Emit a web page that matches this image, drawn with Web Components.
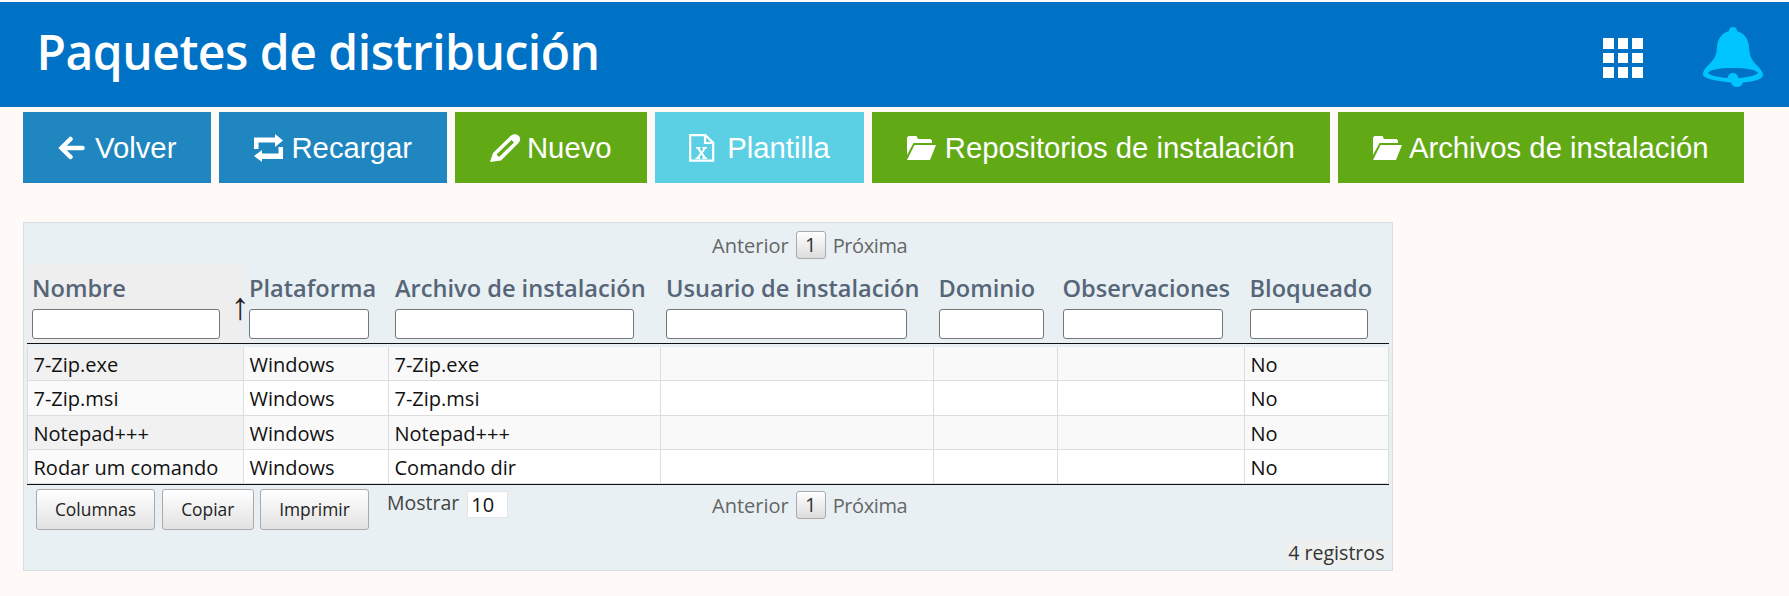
<!DOCTYPE html>
<html lang="es">
<head>
<meta charset="utf-8">
<title>Paquetes de distribución</title>
<style>
html,body{margin:0;padding:0;background:#fff9f7}
body{padding-top:2px;font-family:"Open Sans","Noto Sans",sans-serif;color:#222}
</style>
</head>
<body>
<app-header title-text="Paquetes de distribución"></app-header>
<action-bar>
  <action-btn kind="blue" gap="10" label="Volver">
    <svg slot="icon" width="27" height="24" viewBox="0 0 27 24"><path d="M24.500 12H4M12.500 3 3.500 12l9 9" fill="none" stroke="#fff" stroke-width="4.500" stroke-linecap="round"/></svg>
  </action-btn>
  <action-btn kind="blue" gap="8" label="Recargar">
    <svg slot="icon" width="29" height="28" viewBox="0 0 29 28"><path d="M0 15V3.500h21V0l8 6.500-8 6.500V8.500H4.500V15zM29 13v12H8v3l-8-6 8-6v3.500h16.500V13z" fill="#fff"/></svg>
  </action-btn>
  <action-btn kind="green" gap="6" label="Nuevo">
    <svg slot="icon" width="31" height="30" viewBox="0 0 31 30"><path d="M0 29 3 20 20.500 3C23 .6 26 .6 28.300 2.600s2.600 5 .2 7.400L11 27.500z" fill="#fff"/><path d="M6.500 21.500 21.500 7l2.500 2.500L9 24z" fill="#62a916"/></svg>
  </action-btn>
  <action-btn kind="cyan" gap="12.500" pad="34" label="Plantilla">
    <svg slot="icon" width="26" height="28" viewBox="0 0 26 28"><path d="M1.200 1.200h15l8 7.500v18H1.200zM16 1.500v7.500h8" fill="none" stroke="#fff" stroke-width="2.200"/><path d="M7 13h4.500v1.500H10.600l1.900 3 1.900-3h-.9V13H18v1.500h-1.200l-3 4.500 3.200 4.500H18V25h-4.600v-1.500h.9l-2-3-2 3h.9V25H6.500v-1.500h1.400l3.200-4.500-3-4.500H7z" fill="#fff"/></svg>
  </action-btn>
  <action-btn kind="green" gap="9" label="Repositorios de instalación">
    <svg slot="icon" width="29" height="24" viewBox="0 0 29 24"><path d="M0 1.500 1.500 0h8L11 3h12.500L25 4.500V7H6.500L0 19z" fill="#fff"/><path d="M7.500 9H29l-6 15H0z" fill="#fff"/></svg>
  </action-btn>
  <action-btn kind="green" gap="7" label="Archivos de instalación">
    <svg slot="icon" width="29" height="24" viewBox="0 0 29 24"><path d="M0 1.500 1.500 0h8L11 3h12.500L25 4.500V7H6.500L0 19z" fill="#fff"/><path d="M7.500 9H29l-6 15H0z" fill="#fff"/></svg>
  </action-btn>
</action-bar>
<data-panel></data-panel>

<script>
function shadow(el, html){ el.attachShadow({mode:'open'}).innerHTML = html; }

class AppHeader extends HTMLElement{
  connectedCallback(){
    const cells = Array.from({length:9},()=>'<i></i>').join('');
    shadow(this,`<style>
      :host{display:flex;align-items:center;height:105px;background:#0072c6;color:#fff;padding-left:36.500px;padding-right:26px;box-sizing:border-box}
      h1{margin:0 auto 0 0;font:600 48px/1 "Open Sans","Noto Sans",sans-serif;position:relative;top:-3px;letter-spacing:-.5px}
      .grid{display:grid;grid-template-columns:repeat(3,10.600px);grid-auto-rows:10.600px;gap:4.100px;margin-right:60px;margin-top:7px}
      .grid i{background:#fff;display:block}
      svg{display:block;margin-top:4px}
    </style>
    <h1>${this.getAttribute('title-text')}</h1>
    <div class="grid">${cells}</div>
    <svg width="60" height="60" viewBox="0 0 60 60"><path fill="#00c4ff" d="M30 0c2.500 0 4 1.500 4 4 7 2 11.500 8 12 16 .5 8 1.500 12 8.500 19 3.500 3.500 5.500 6 5.500 9 0 3.500-6 6-20 7.500-.8 3-3.300 4.500-6 4.500s-5.200-1.500-6-4.500C14 54 0 52 0 47c0-3 2-5.500 5.500-9C12.500 31 13.500 27.500 14 20c.5-8 5-14 12-16 0-2.500 1.500-4 4-4z"/><path fill="#0072c6" d="M30 41c-14 0-24 2-25 5 2 2.500 10 4.500 19.500 5 .5-3 2.500-5 5.500-5s5 2 5.500 5c9.500-.5 17.500-2.500 19.500-5-1-3-11-5-25-5z"/></svg>`);
  }
}
customElements.define('app-header',AppHeader);

class ActionBar extends HTMLElement{
  connectedCallback(){
    shadow(this,`<style>:host{display:flex;gap:8px;margin:5px 0 0 23px}</style><slot></slot>`);
  }
}
customElements.define('action-bar',ActionBar);

class ActionBtn extends HTMLElement{
  connectedCallback(){
    const colors={blue:'#2086bf',green:'#62a916',cyan:'#5bcfe3'};
    const c=colors[this.getAttribute('kind')];
    const gap=this.getAttribute('gap');
    const pad=this.getAttribute('pad')||35;
    shadow(this,`<style>
      :host{display:flex;align-items:center;height:71px;padding:0 ${pad}px;background:${c};color:#fff;font:29.300px/1 "Liberation Sans",Arial,sans-serif;box-sizing:border-box;gap:${gap}px}
      ::slotted(svg){display:block;flex:none}
      span{white-space:nowrap}
    </style><slot name="icon"></slot><span>${this.getAttribute('label')}</span>`);
  }
}
customElements.define('action-btn',ActionBtn);

class PagerCtl extends HTMLElement{
  connectedCallback(){
    shadow(this,`<style>
      :host{display:flex;align-items:center;gap:7px;color:#666;font:20px/28px "Open Sans","Noto Sans",sans-serif;height:28px}
      span{padding-top:1px}
      .next{letter-spacing:-.4px}
      b{font-weight:400;color:#333;width:30px;height:28px;box-sizing:border-box;border:1px solid #aaa;border-radius:3px;background:linear-gradient(#fff,#dcdcdc);text-align:center;line-height:26px}
    </style><span>Anterior</span><b>1</b><span class="next">Próxima</span>`);
  }
}
customElements.define('pager-ctl',PagerCtl);

class ToolBtn extends HTMLElement{
  connectedCallback(){
    shadow(this,`<style>
      :host{display:flex;align-items:center;justify-content:center;height:41px;box-sizing:border-box;border:1px solid #aaa;border-radius:3px;background:linear-gradient(#fff,#e2e2e2);color:#222;font:17.400px/1 "Open Sans","Noto Sans",sans-serif}
    </style><slot></slot>`);
  }
}
customElements.define('tool-btn',ToolBtn);

class PackageTable extends HTMLElement{
  connectedCallback(){
    const cols=[
      ['Nombre',5,188],['Plataforma',5,120],['Archivo de instalación',6,239],
      ['Usuario de instalación',5,240.500],['Dominio',4.500,105],['Observaciones',4.500,160],['Bloqueado',4.500,118]
    ];
    const rows=[
      ['7-Zip.exe','Windows','7-Zip.exe','','','','No'],
      ['7-Zip.msi','Windows','7-Zip.msi','','','','No'],
      ['Notepad+++','Windows','Notepad+++','','','','No'],
      ['Rodar um comando','Windows','Comando dir','','','','No']
    ];
    const head=cols.map((c,i)=>`<div class="th ${i==0?'sorted':''}" style="padding-left:${c[1]}px"><span class="lbl">${c[0]}</span><input type="text" style="width:${c[2]}px">${i==0?'<span class="arrow">↑</span>':''}</div>`).join('');
    const body=rows.map((r,ri)=>r.map((t,i)=>`<div class="td ${ri%2?'even':'odd'} ${i==0?'first':''}">${t}</div>`).join('')).join('');
    shadow(this,`<style>
      :host{display:block}
      .g{display:grid;grid-template-columns:217px 145px 272px 273px 124px 187px 144px}
      .head{border-bottom:1px solid #111;height:79px;box-sizing:border-box}
      .th{position:relative;height:78px;box-sizing:border-box;display:flex;flex-direction:column;justify-content:flex-start}
      .sorted{background:#eee}
      .lbl{font:600 23.600px/30px "Open Sans","Noto Sans",sans-serif;color:#566678;white-space:nowrap;margin-top:8px}
      input{display:block;box-sizing:border-box;height:30px;margin:6px 0 0;border:1px solid #767676;border-radius:3px;background:#fff;padding:0}
      .arrow{position:absolute;right:-6px;width:20px;text-align:center;top:25px;font:38px/32px "Liberation Sans",sans-serif;color:#222}
      .body{margin-top:3px;border-bottom:1px solid #111;grid-auto-rows:34.250px}
      .td{box-sizing:border-box;border-right:1px solid #ddd;border-bottom:1px solid #ddd;padding-left:5.500px;font:20px/35px "Open Sans","Noto Sans",sans-serif;color:#111;white-space:nowrap}
      .odd{background:#f9f9f9}.even{background:#fff}
      .odd.first{background:#f1f1f1}.even.first{background:#fafafa}
      .first{border-left:1px solid #ddd}
    </style>
    <div class="g head">${head}</div>
    <div class="g body">${body}</div>`);
  }
}
customElements.define('package-table',PackageTable);

class DataPanel extends HTMLElement{
  connectedCallback(){
    shadow(this,`<style>
      :host{display:block;position:relative;box-sizing:border-box;width:1370px;height:349px;margin:39px 0 0 23px;border:1px solid #d9dfe1;background:#e8f0f3;padding:0 3px}
      .top{height:42px;padding:8px 0 0 685px;box-sizing:border-box}
      .foot{display:grid;grid-template-columns:9px 119px 7px 91.500px 6.500px 109px 18px 325px auto;margin-top:1px;height:83px;align-items:start}
      tool-btn{margin-top:3px}
      .mostrar{display:flex;align-items:flex-start;gap:8px;font:19.500px/27px "Open Sans","Noto Sans",sans-serif;color:#444;margin-top:3px;white-space:nowrap}
      .num{display:block;width:41px;height:27px;margin-top:2px;background:#fff;border:1px solid #e5e5e5;box-sizing:border-box;color:#111;font-size:20px;line-height:25px;padding-left:3px}
      .foot pager-ctl{margin-top:5px}
      .info{position:absolute;right:5.500px;bottom:4px;height:27px;background:#eef0f0;color:#333;font:19.600px/27px "Open Sans","Noto Sans",sans-serif;padding:0 2px}
    </style>
    <div class="top"><pager-ctl></pager-ctl></div>
    <package-table></package-table>
    <div class="foot">
      <span></span><tool-btn>Columnas</tool-btn><span></span><tool-btn>Copiar</tool-btn><span></span><tool-btn>Imprimir</tool-btn><span></span>
      <div class="mostrar"><span>Mostrar</span><span class="num">10</span></div>
      <pager-ctl></pager-ctl>
    </div>
    <span class="info">4 registros</span>`);
  }
}
customElements.define('data-panel',DataPanel);
</script>
</body>
</html>
